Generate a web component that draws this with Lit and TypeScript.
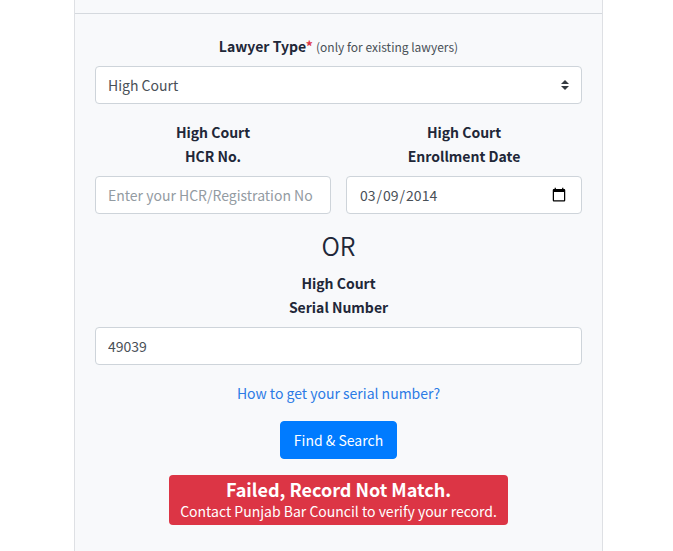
import { LitElement, html, css } from "lit";
import { customElement } from "lit/decorators.js";

@customElement("app-root")
export class AppRoot extends LitElement {
  static styles = css`
    :host {
      display: block;
      min-height: 100vh;
      background: #fff;
      color: #212738;
      font-family: "Source Sans Pro", "Noto Sans CJK SC", "Noto Sans", sans-serif;
      font-size: 14px;
      line-height: 24px;
    }
    *,
    *::before,
    *::after {
      box-sizing: border-box;
    }
    .page {
      display: flex;
      flex-direction: column;
      min-height: 100vh;
      padding: 0 70px 0 74px;
    }
    .card {
      flex: 1;
      background: #f8f9fb;
      border: solid #dee0e4;
      border-width: 0 1px;
    }
    .header {
      height: 14px;
      border-bottom: 1px solid #d5d9de;
    }
    .form {
      display: flex;
      flex-direction: column;
      gap: 16px;
      padding: 20px;
      text-align: center;
    }
    .columns {
      display: grid;
      grid-template-columns: 1fr 1fr;
      gap: 15px;
    }
    .field {
      display: flex;
      flex-direction: column;
      gap: 8px;
      min-width: 0;
    }
    .label {
      font-weight: 700;
    }
    .required {
      color: #dc3545;
    }
    .hint {
      font-size: 12px;
      font-weight: 400;
      line-height: 16px;
      color: #495057;
    }
    .control {
      display: block;
      width: 100%;
      height: 38px;
      margin: 0;
      padding: 6px 12px;
      border: 1px solid #ced4da;
      border-radius: 4px;
      background: #fff;
      color: #495057;
      font: inherit;
      appearance: none;
    }
    .control::placeholder {
      color: #939ba2;
      opacity: 1;
    }
    .control::-webkit-calendar-picker-indicator {
      width: 16px;
      height: 16px;
    }
    .select {
      position: relative;
    }
    .arrows {
      position: absolute;
      top: 14px;
      right: 13px;
      width: 8px;
      height: 10px;
      fill: #343a40;
      pointer-events: none;
    }
    .serial {
      display: flex;
      flex-direction: column;
      gap: 11px;
    }
    .or {
      margin: 0;
      font-size: 25px;
      font-weight: 350;
      line-height: 30px;
    }
    .link {
      align-self: center;
      color: #2c7be5;
      text-decoration: none;
    }
    .submit {
      align-self: center;
      height: 38px;
      padding: 6px 13px;
      border: 1px solid #007bff;
      border-radius: 4px;
      background: #007bff;
      color: #fff;
      font: inherit;
      cursor: pointer;
    }
    .alert {
      align-self: center;
      padding: 2px 11px 4px;
      border-radius: 4px;
      background: #dc3545;
      color: #fff;
      line-height: 20px;
    }
    .title {
      display: block;
      font-size: 18px;
      line-height: 24px;
    }
  `;

  render() {
    return html`
      <main class="page">
        <section class="card">
          <div class="header"></div>
          <form class="form" @submit=${(e: Event) => e.preventDefault()}>
            <div class="field">
              <label class="label" for="type"
                >Lawyer Type<span class="required">*</span>
                <span class="hint">(only for existing lawyers)</span></label
              >
              <div class="select">
                <select class="control" id="type">
                  <option selected>High Court</option>
                </select>
                <svg class="arrows" viewBox="0 0 4 5" aria-hidden="true">
                  <path d="M2 0L0 2h4zm0 5L0 3h4z" />
                </svg>
              </div>
            </div>
            <div class="columns">
              <div class="field">
                <label class="label" for="hcr">High Court<br />HCR No.</label>
                <input class="control" id="hcr" type="text" placeholder="Enter your HCR/Registration No" />
              </div>
              <div class="field">
                <label class="label" for="date">High Court<br />Enrollment Date</label>
                <input class="control" id="date" type="date" value="2014-03-09" />
              </div>
            </div>
            <div class="serial">
              <h3 class="or">OR</h3>
              <div class="field">
                <label class="label" for="serial">High Court<br />Serial Number</label>
                <input class="control" id="serial" type="text" value="49039" />
              </div>
            </div>
            <a class="link" href="#">How to get your serial number?</a>
            <button class="submit" type="submit">Find &amp; Search</button>
            <div class="alert" role="alert">
              <strong class="title">Failed, Record Not Match.</strong>
              Contact Punjab Bar Council to verify your record.
            </div>
          </form>
        </section>
      </main>
    `;
  }
}
